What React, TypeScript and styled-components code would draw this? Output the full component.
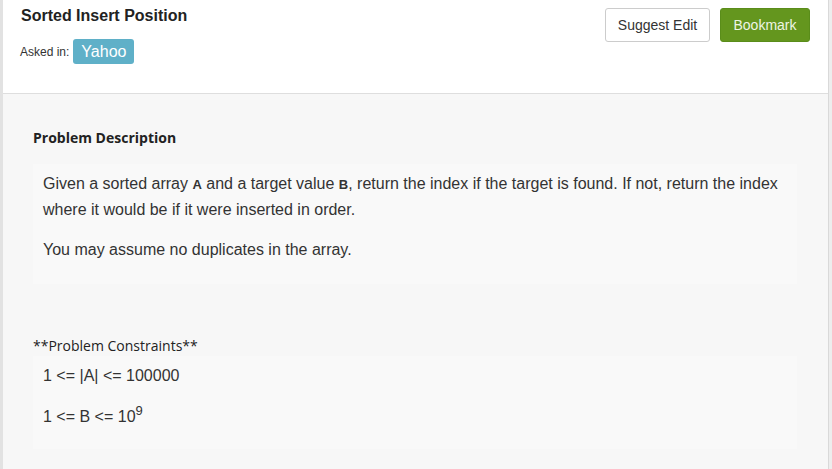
import React from "react";
import styled, { createGlobalStyle } from "styled-components";

const Global = createGlobalStyle`
  html, body { margin: 0; padding: 0; background: #ececec; }
  body { font-family: "Liberation Sans", Arial, sans-serif; color: #333; }
`;

const Frame = styled.div`
  width: 832px;
  height: 469px;
  overflow: hidden;
  display: flex;
  background: #ededed;
`;

const Card = styled.div`
  width: 825px;
  border-left: 3px solid #e2e2e2;
  border-right: 1px solid #d9d9d9;
  background: #f7f7f7;
  display: flex;
  flex-direction: column;
`;

const Header = styled.header`
  background: #fff;
  border-bottom: 1px solid #dedede;
  display: flex;
  justify-content: space-between;
  align-items: flex-start;
  padding: 6px 18px 0 18px;
  box-sizing: content-box;
  height: 87px;
`;

const TitleBlock = styled.div`
  display: flex;
  flex-direction: column;
`;

const Title = styled.h1`
  margin: 0;
  font-size: 16px;
  line-height: 20px;
  font-weight: bold;
  color: #222;
`;

const AskedRow = styled.div`
  display: flex;
  align-items: center;
  gap: 4px;
  margin-top: 13px;
  margin-left: -1px;
`;

const AskedLabel = styled.span`
  font-size: 12px;
  color: #333;
`;

const Tag = styled.span`
  background: #5fb0c8;
  color: #fff;
  font-size: 16px;
  line-height: 25px;
  height: 25px;
  padding: 0 8px;
  border-radius: 3px;
`;

const Actions = styled.div`
  display: flex;
  gap: 10px;
  margin-top: 2px;
`;

const Button = styled.button<{ $primary?: boolean }>`
  height: 34px;
  box-sizing: border-box;
  padding: 0;
  white-space: nowrap;
  font-family: "Liberation Sans", Arial, sans-serif;
  font-size: 14px;
  border-radius: 3px;
  border: 1px solid ${(p) => (p.$primary ? "#5a8d1a" : "#cccccc")};
  background: ${(p) => (p.$primary ? "#64961e" : "#ffffff")};
  color: ${(p) => (p.$primary ? "#eef5e4" : "#333333")};
  width: ${(p) => (p.$primary ? "90px" : "105px")};
`;

const Body = styled.main`
  padding: 34px 30px 0 30px;
  display: flex;
  flex-direction: column;
`;

const SectionTitle = styled.h2<{ $plain?: boolean }>`
  margin: 0;
  font-family: "Open Sans", sans-serif;
  font-size: 14px;
  line-height: 20px;
  font-weight: ${(p) => (p.$plain ? 400 : 700)};
  color: #222;
`;

const Block = styled.div<{ $gap: number }>`
  width: 764px;
  box-sizing: border-box;
  background: #f9f9f9;
  padding: 7px 10px 0 10px;
  & > p {
    margin-bottom: ${(p) => p.$gap}px;
  }
`;

const Para = styled.p`
  margin: 0;
  font-size: 16px;
  line-height: 25px;
  color: #333;
`;

const SmallBold = styled.b`
  font-size: 13px;
`;

const Sup = styled.sup`
  font-size: 13px;
  line-height: 0;
  vertical-align: 7px;
`;

export default function App() {
  return (
    <>
      <Global />
      <Frame>
        <Card>
          <Header>
            <TitleBlock>
              <Title>Sorted Insert Position</Title>
              <AskedRow>
                <AskedLabel>Asked in:</AskedLabel>
                <Tag>Yahoo</Tag>
              </AskedRow>
            </TitleBlock>
            <Actions>
              <Button>Suggest Edit</Button>
              <Button $primary>Bookmark</Button>
            </Actions>
          </Header>
          <Body>
            <SectionTitle>Problem Description</SectionTitle>
            <Block $gap={15} style={{ marginTop: 16, height: 120 }}>
              <Para>
                Given a sorted array <SmallBold>A</SmallBold> and a target value{" "}
                <SmallBold>B</SmallBold>, return the index if the target is found. If not,
                return the index where it would be if it were inserted in order.
              </Para>
              <Para>You may assume no duplicates in the array.</Para>
            </Block>
            <SectionTitle $plain style={{ marginTop: 52 }}>
              **Problem Constraints**
            </SectionTitle>
            <Block $gap={16} style={{ height: 93, paddingTop: 7 }}>
              <Para>1 &lt;= |A| &lt;= 100000</Para>
              <Para>
                1 &lt;= B &lt;= 10<Sup>9</Sup>
              </Para>
            </Block>
          </Body>
        </Card>
      </Frame>
    </>
  );
}
